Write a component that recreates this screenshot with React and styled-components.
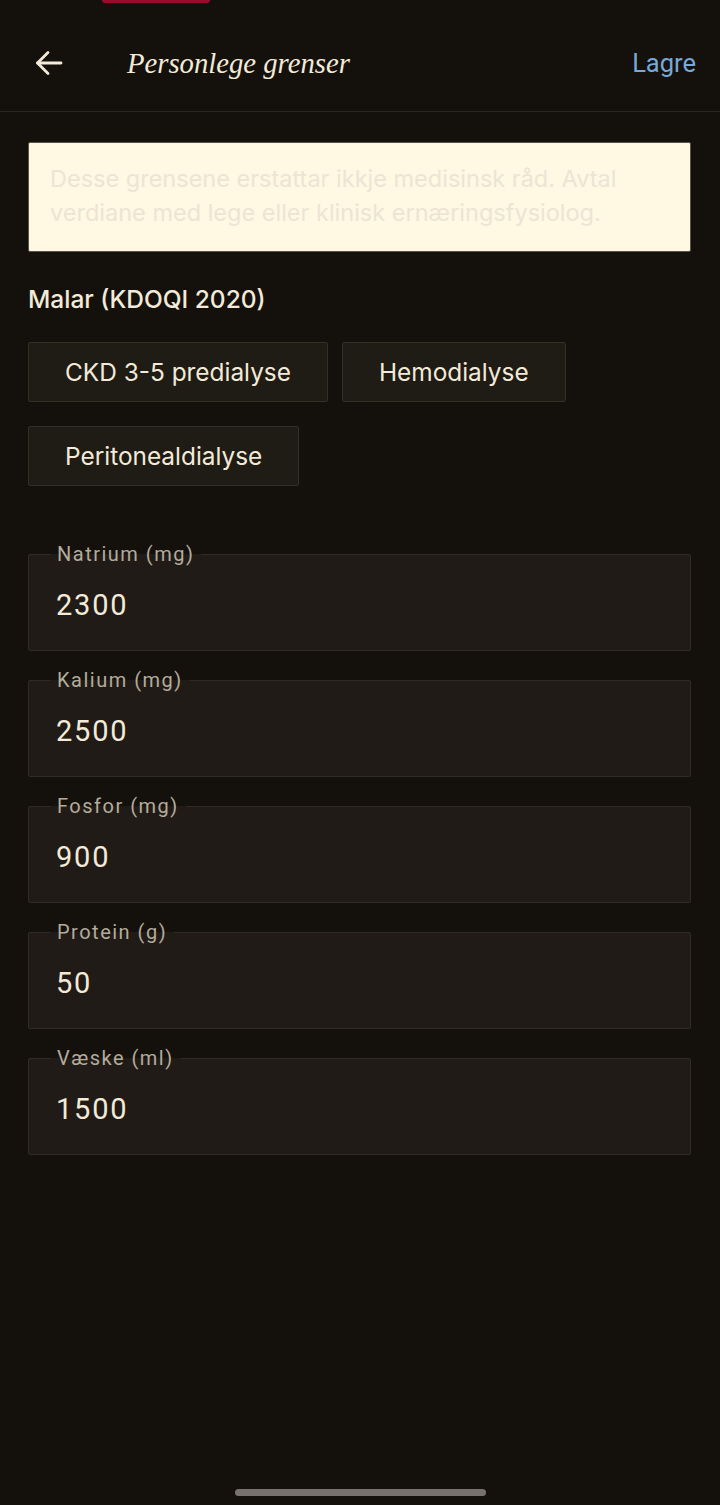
import React from "react";
import styled, { createGlobalStyle } from "styled-components";

const Global = createGlobalStyle`
  html, body { margin: 0; padding: 0; background: #14110d; }
  * { box-sizing: border-box; }
`;

const Page = styled.div`
  min-height: 1505px;
  display: flex;
  flex-direction: column;
  background: #14110d;
  color: #f3ead7;
  font-family: Inter, "Noto Sans", sans-serif;
`;

const StatusStrip = styled.div`
  height: 3px;
  display: flex;
  padding-left: 102px;
`;

const Pill = styled.div`
  width: 108px;
  height: 3px;
  background: #9c0a2e;
  border-radius: 0 0 4px 4px;
`;

const Header = styled.header`
  height: 109px;
  display: flex;
  align-items: center;
  padding: 12px 24px 0 34px;
  border-bottom: 1px solid #2a251e;
`;

const BackButton = styled.button`
  background: none;
  border: none;
  padding: 0;
  width: 30px;
  height: 30px;
  display: flex;
  align-items: center;
  justify-content: center;
  color: #f3ead7;
`;

const Title = styled.h1`
  margin: 0 0 0 63px;
  flex: 1;
  font-family: "Liberation Serif", serif;
  font-style: italic;
  font-weight: 400;
  font-size: 28.7px;
  color: #f3ead7;
`;

const SaveButton = styled.button`
  background: none;
  border: none;
  padding: 0;
  font-family: Roboto, sans-serif;
  font-size: 25.5px;
  color: #78a8d8;
`;

const Content = styled.main`
  padding: 30px 29px 0 28px;
  display: flex;
  flex-direction: column;
`;

const Notice = styled.div`
  background: #fff8e2;
  border: 1px solid #5b5549;
  border-radius: 2px;
  padding: 19px 21px 21px;
  font-family: Inter, sans-serif;
  font-size: 23.5px;
  line-height: 34px;
  color: #ece5d6;
`;

const SectionTitle = styled.h2`
  margin: 32px 0 0;
  font-family: Inter, sans-serif;
  font-weight: 500;
  font-size: 24.5px;
  line-height: 30px;
  color: #f3ead7;
`;

const ChipRow = styled.div`
  display: flex;
  flex-wrap: wrap;
  gap: 24px 14px;
  margin-top: 28px;
`;

const Chip = styled.button`
  height: 60px;
  padding: 0 36px;
  background: #1f1b15;
  border: 1px solid #332e26;
  border-radius: 2px;
  font-family: Inter, sans-serif;
  font-size: 24.4px;
  color: #f3ead7;
`;

const Fields = styled.div`
  display: flex;
  flex-direction: column;
  gap: 15px;
  margin-top: 54px;
`;

const Field = styled.fieldset`
  margin: 0;
  padding: 0 27px 0 21px;
  height: 111px;
  background: #201b16;
  border: 1px solid #302b23;
  border-radius: 2px;
`;

const Legend = styled.legend`
  padding: 0 7px;
  margin-left: 0;
  font-family: Roboto, sans-serif;
  font-size: 20px;
  line-height: 28px;
  letter-spacing: 1.5px;
  color: #b3ab9b;
`;

const Value = styled.input`
  display: block;
  width: 100%;
  background: transparent;
  border: none;
  outline: none;
  padding: 0 0 0 6px;
  margin-top: 19px;
  height: 36px;
  font-family: Roboto, sans-serif;
  font-size: 29px;
  letter-spacing: 1.8px;
  color: #f3ead7;
`;

const HomeBar = styled.div`
  margin: auto auto 9px;
  width: 251px;
  height: 7px;
  border-radius: 4px;
  background: #77736c;
`;

const templates = ["CKD 3-5 predialyse", "Hemodialyse", "Peritonealdialyse"];
const fields = [
  ["Natrium (mg)", "2300"],
  ["Kalium (mg)", "2500"],
  ["Fosfor (mg)", "900"],
  ["Protein (g)", "50"],
  ["Væske (ml)", "1500"],
];

export default function App() {
  return (
    <Page>
      <Global />
      <StatusStrip>
        <Pill />
      </StatusStrip>
      <Header>
        <BackButton aria-label="Tilbake">
          <svg width="30" height="30" viewBox="0 0 30 30" fill="none" stroke="currentColor" strokeWidth="2.8" strokeLinecap="round" strokeLinejoin="round">
            <path d="M27 15H3.5" />
            <path d="M14 4.5 3.5 15 14 25.5" />
          </svg>
        </BackButton>
        <Title>Personlege grenser</Title>
        <SaveButton>Lagre</SaveButton>
      </Header>
      <Content>
        <Notice>
          Desse grensene erstattar ikkje medisinsk råd. Avtal verdiane med lege eller klinisk ernæringsfysiolog.
        </Notice>
        <SectionTitle>Malar (KDOQI 2020)</SectionTitle>
        <ChipRow>
          {templates.map((t) => (
            <Chip key={t}>{t}</Chip>
          ))}
        </ChipRow>
        <Fields>
          {fields.map(([label, value]) => (
            <Field key={label}>
              <Legend>{label}</Legend>
              <Value defaultValue={value} inputMode="numeric" />
            </Field>
          ))}
        </Fields>
      </Content>
      <HomeBar />
    </Page>
  );
}
